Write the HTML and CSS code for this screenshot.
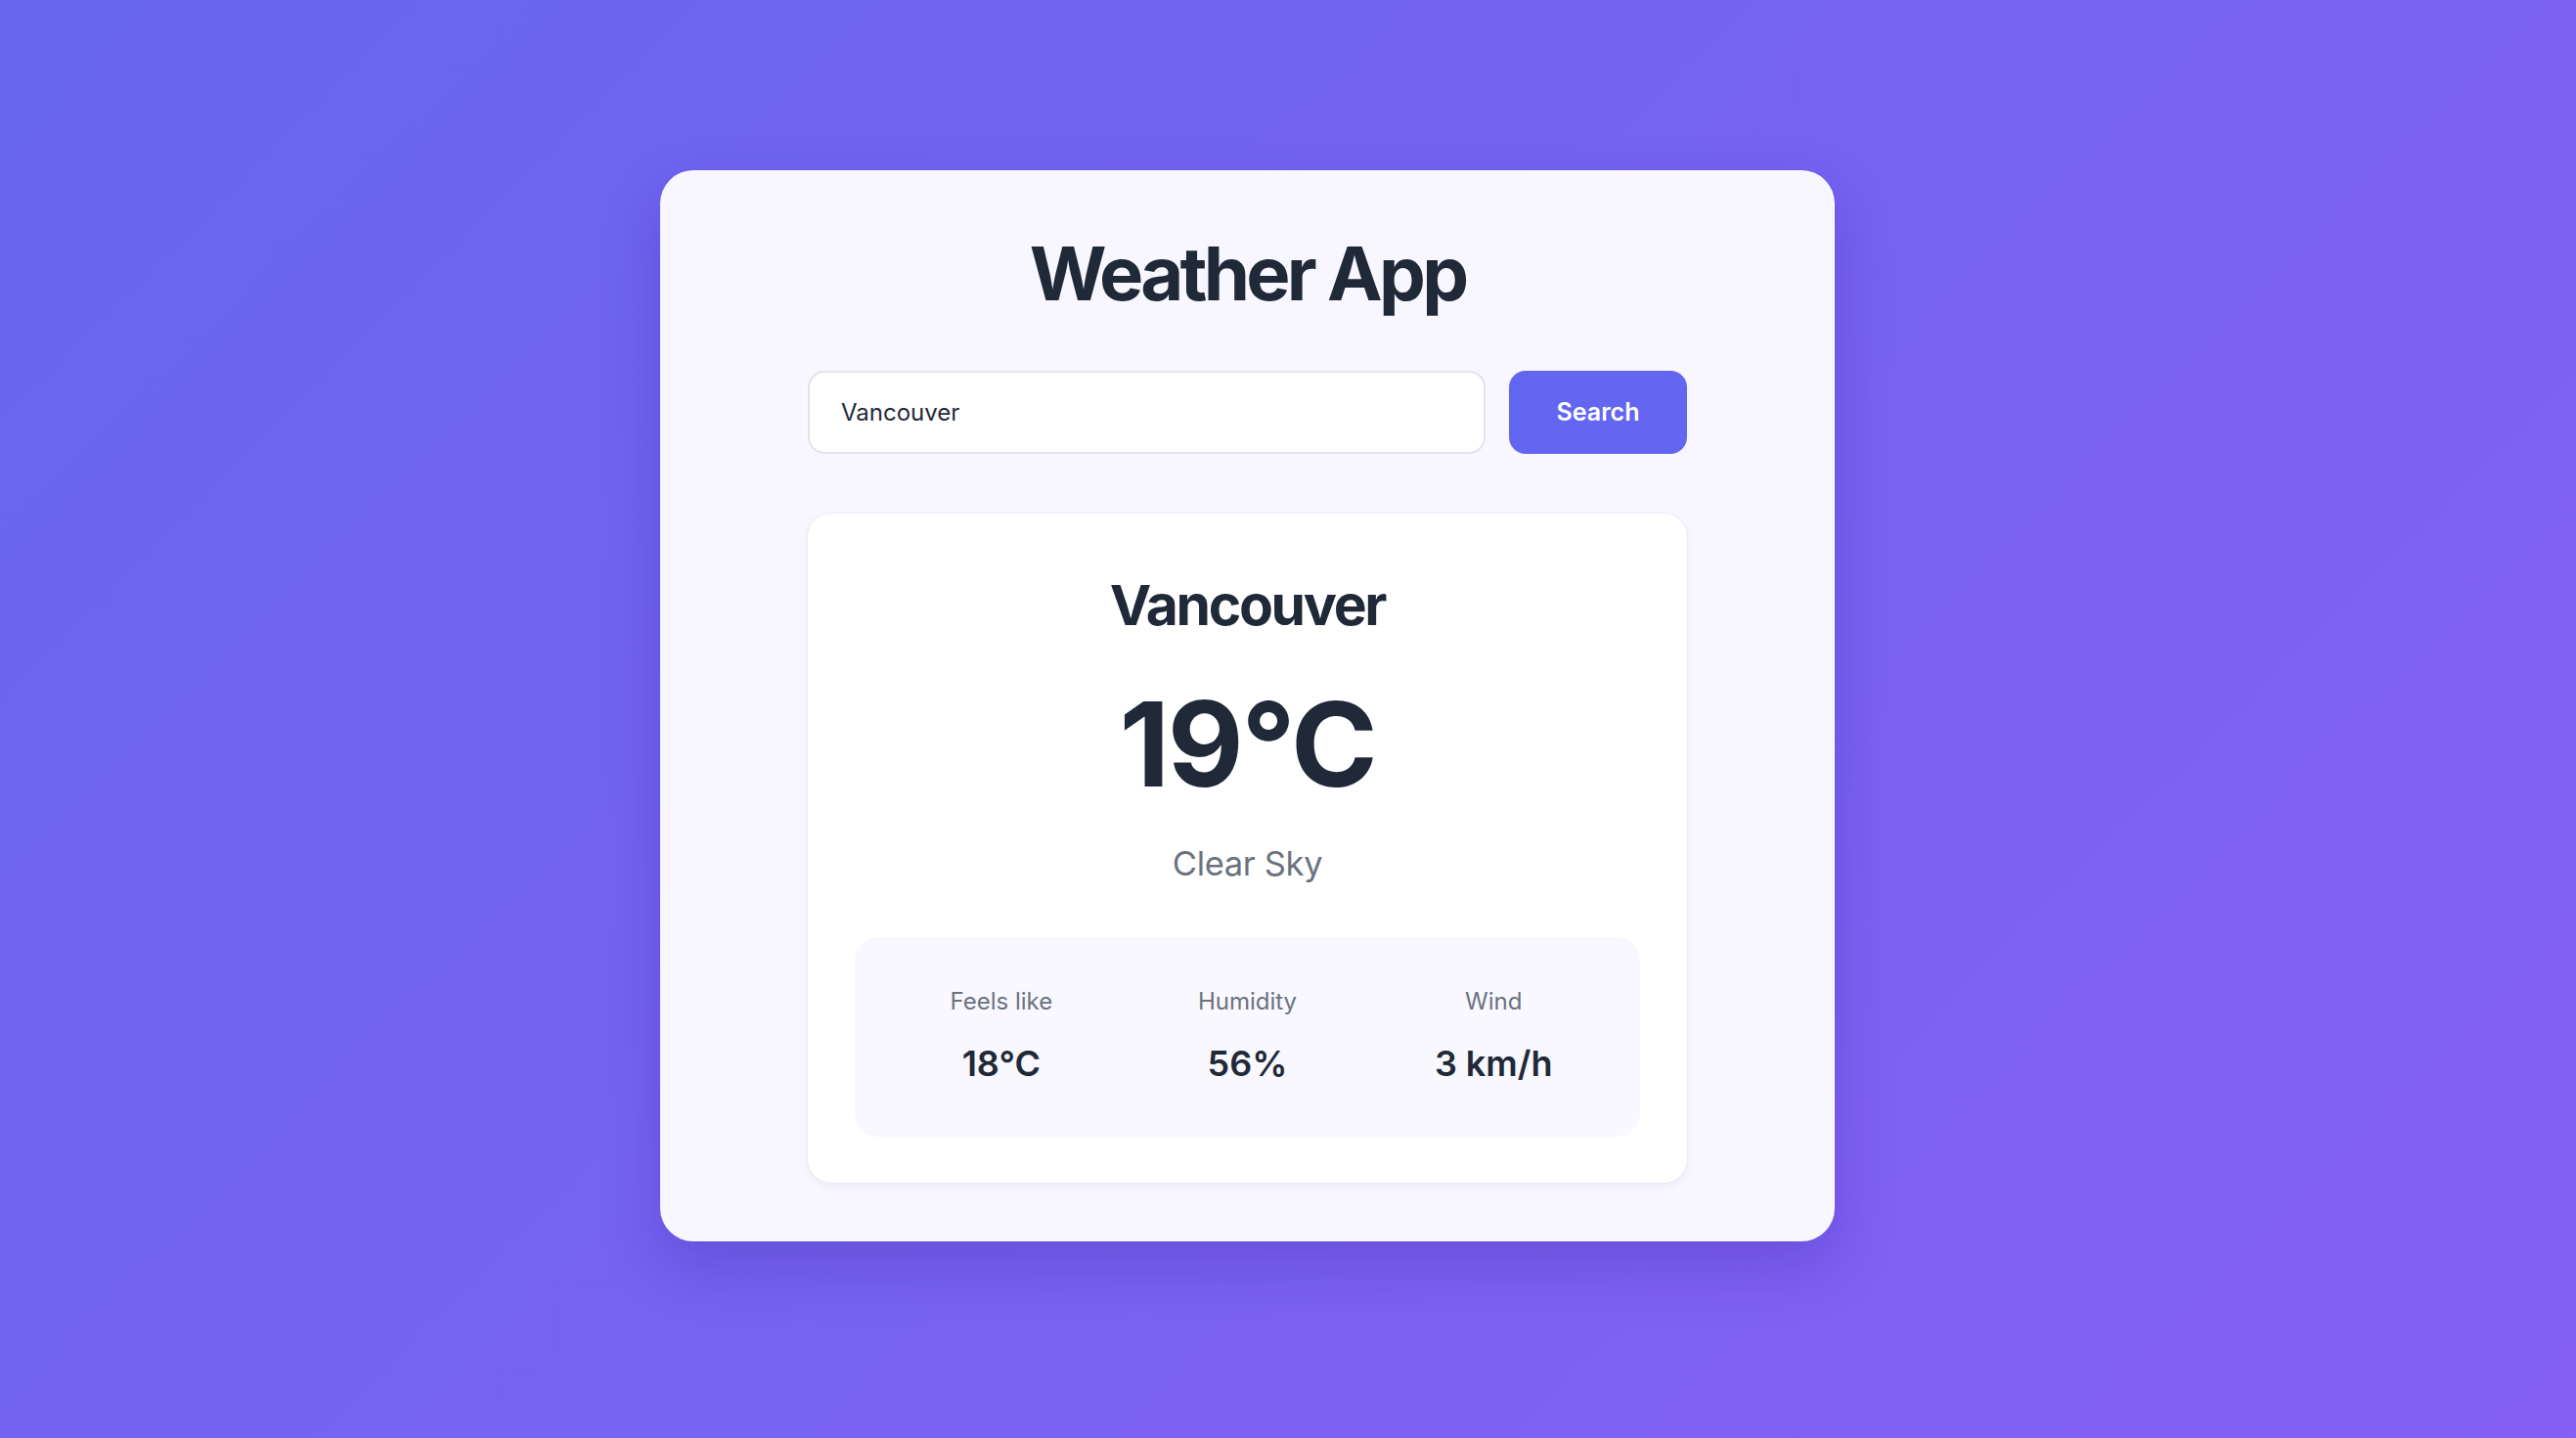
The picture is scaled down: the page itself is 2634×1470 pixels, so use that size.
FILE: index.html
```html
<!DOCTYPE html>
<html lang="en">
<head>
<meta charset="utf-8">
<title>Weather App</title>
<link rel="stylesheet" href="styles.css">
</head>
<body>
<main class="app">
  <h1 class="app-title">Weather App</h1>
  <form class="search" onsubmit="return false;">
    <input class="search-input" type="text" value="Vancouver" aria-label="City">
    <button class="search-button" type="submit">Search</button>
  </form>
  <section class="weather">
    <h2 class="city">Vancouver</h2>
    <div class="temp">19°C</div>
    <p class="desc">Clear Sky</p>
    <div class="stats">
      <div class="stat">
        <span class="stat-label">Feels like</span>
        <span class="stat-value">18°C</span>
      </div>
      <div class="stat">
        <span class="stat-label">Humidity</span>
        <span class="stat-value">56%</span>
      </div>
      <div class="stat">
        <span class="stat-label">Wind</span>
        <span class="stat-value">3 km/h</span>
      </div>
    </div>
  </section>
</main>
</body>
</html>
```

FILE: styles.css
```css
* { box-sizing: border-box; }

html, body { height: 100%; }

body {
  margin: 0;
  min-height: 100vh;
  display: flex;
  align-items: center;
  justify-content: center;
  padding: 0 83px 27px 0;
  font-family: Inter, "Noto Sans", "Liberation Sans", sans-serif;
  background: linear-gradient(135deg, #6866f0 0%, #855ff6 100%);
  color: #1f2937;
}

.app {
  width: 1201px;
  padding: 60px 151px 60px;
  background: rgba(255, 255, 255, 0.95);
  border-radius: 34px;
  box-shadow: 0 25px 60px rgba(40, 20, 120, 0.22);
}

.app-title {
  margin: 0 0 54px;
  font-size: 76px;
  line-height: 1.2;
  font-weight: 700;
  letter-spacing: -0.05em;
  text-align: center;
  color: #1f2937;
}

.search {
  display: flex;
  gap: 24px;
  margin: 0 0 61px;
}

.search-input {
  flex: 1;
  height: 85px;
  padding: 0 32px;
  border: 2px solid #e3e4ea;
  border-radius: 17px;
  background: #fff;
  font-family: inherit;
  font-size: 24px;
  color: #1f2937;
  outline: none;
}

.search-button {
  width: 182px;
  height: 85px;
  border: 0;
  border-radius: 17px;
  background: #6366f1;
  color: #fff;
  font-family: inherit;
  font-size: 25px;
  font-weight: 600;
  cursor: pointer;
}

.weather {
  padding: 60px 48px 47px;
  background: #fff;
  border-radius: 24px;
  box-shadow: 0 3px 10px rgba(30, 20, 90, 0.06), 0 0 0 1px rgba(30, 20, 90, 0.03);
  text-align: center;
}

.city {
  margin: 0;
  font-size: 57px;
  line-height: 1.2;
  font-weight: 700;
  letter-spacing: -0.04em;
}

.temp {
  margin: 36px 0 0;
  font-size: 120px;
  line-height: 1.2;
  font-weight: 700;
  letter-spacing: -0.02em;
}

.desc {
  margin: 24px 0 0;
  font-size: 34.5px;
  line-height: 1.5;
  letter-spacing: -0.01em;
  color: #6b7280;
}

.stats {
  display: grid;
  grid-template-columns: repeat(3, 1fr);
  gap: 48px;
  margin-top: 49px;
  padding: 48px 48px 53px;
  background: #f8f8fe;
  border-radius: 24px;
}

.stat {
  display: flex;
  flex-direction: column;
  align-items: center;
  gap: 24px;
}

.stat-label {
  font-size: 24px;
  line-height: 1.5;
  color: #6b7280;
}

.stat-value {
  font-size: 36px;
  line-height: 1.2;
  font-weight: 600;
  color: #1f2937;
}
```
